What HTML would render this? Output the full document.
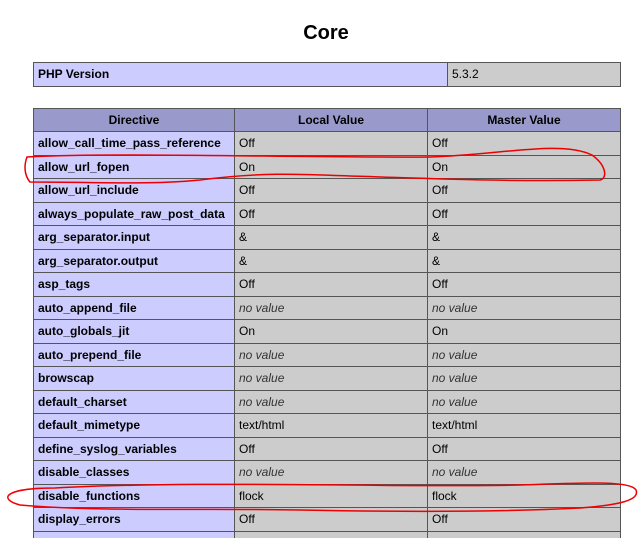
<!DOCTYPE html>
<html style="width:640px;height:538px;overflow:hidden"><head><style>
body{margin:0;width:640px;height:538px;overflow:hidden;background:#fff;font-family:"Liberation Sans","DejaVu Sans",sans-serif;position:relative}
.c{position:absolute;box-sizing:border-box;border:1px solid #555;font-size:12px;line-height:22px;padding-left:4px;white-space:nowrap;overflow:hidden;color:#000}
.e{background:#ccccff;font-weight:bold}
.v{background:#cccccc}
.h{background:#9999cc;font-weight:bold;text-align:center;padding-left:0}
i{color:#333}
h2{position:absolute;top:21px;left:0;width:652px;text-align:center;margin:0;font-size:20px;line-height:24px}
</style></head><body>
<h2>Core</h2>
<div class="c e" style="left:33px;top:62px;width:415px;height:25px;line-height:23px">PHP Version</div>
<div class="c v" style="left:447px;top:62px;width:174px;height:25px;line-height:23px">5.3.2</div>
<div id="t"></div>
<script>
var rows=[["allow_call_time_pass_reference","Off"],["allow_url_fopen","On"],["allow_url_include","Off"],["always_populate_raw_post_data","Off"],["arg_separator.input","&amp;"],["arg_separator.output","&amp;"],["asp_tags","Off"],["auto_append_file","<i>no value</i>"],["auto_globals_jit","On"],["auto_prepend_file","<i>no value</i>"],["browscap","<i>no value</i>"],["default_charset","<i>no value</i>"],["default_mimetype","text/html"],["define_syslog_variables","Off"],["disable_classes","<i>no value</i>"],["disable_functions","flock"],["display_errors","Off"],["",""]];
var h='';
h+='<div class="c h" style="left:33px;top:108px;width:202px;height:24px">Directive</div>';
h+='<div class="c h" style="left:234px;top:108px;width:194px;height:24px">Local Value</div>';
h+='<div class="c h" style="left:427px;top:108px;width:194px;height:24px">Master Value</div>';
for(var i=0;i<rows.length;i++){var t=Math.round(131+i*23.5);var hh=Math.round(131+(i+1)*23.5)-t+1;
h+='<div class="c e" style="left:33px;top:'+t+'px;width:202px;height:'+hh+'px">'+rows[i][0]+'</div>';
h+='<div class="c v" style="left:234px;top:'+t+'px;width:194px;height:'+hh+'px">'+rows[i][1]+'</div>';
h+='<div class="c v" style="left:427px;top:'+t+'px;width:194px;height:'+hh+'px">'+rows[i][1]+'</div>';}
document.getElementById('t').innerHTML=h;
</script>
<svg style="position:absolute;left:0;top:0" width="640" height="538">
<path d="M27,157 C120,152 300,158 430,157 C500,155 560,140 592,155 C606,165 608,178 600,180 C500,182 420,178 350,176 C300,174 260,172 200,180 C150,185 100,182 30,182 C24,175 24,165 27,157Z" fill="none" stroke="#e00" stroke-width="1.5"/>
<path d="M55,488 C200,480 400,488 520,485 C580,483 630,480 636,490 C640,500 620,505 580,508 C500,512 400,512 300,510 C200,508 100,512 20,505 C0,500 0,488 55,488Z" fill="none" stroke="#e00" stroke-width="1.5"/>
</svg>
</body></html>
